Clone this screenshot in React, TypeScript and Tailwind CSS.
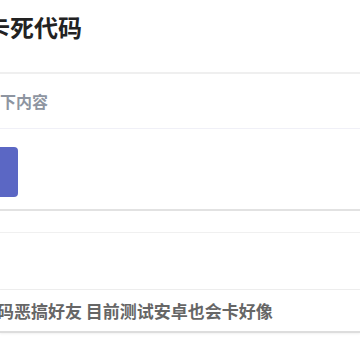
export default function App() {
  return (
    <div
      className="w-[360px] h-[360px] overflow-hidden bg-white"
      style={{ fontFamily: '"Noto Sans CJK SC", "Noto Sans", sans-serif' }}
    >
      {/* title */}
      <div className="h-[74px] border-b-2 border-[#efefef] pt-[11px]">
        <h1 className="-ml-[14px] text-[24px] leading-[32px] font-bold text-[#222222] whitespace-nowrap">
          卡死代码
        </h1>
      </div>

      {/* subtitle */}
      <div className="h-[55px] border-b border-[#f0f0f7] flex items-center">
        <p className="text-[16px] leading-[22px] font-bold text-[#8e95a1] whitespace-nowrap">
          下内容
        </p>
      </div>

      {/* action row */}
      <div className="h-[82px] border-b-2 border-[#e2e2e2] pt-[18px]">
        <button className="-ml-[42px] w-[60px] h-[50px] rounded-[4px] bg-[#5b67c4]" />
      </div>

      <div className="h-[22px] border-b border-[#f0f0f0]" />
      <div className="h-[57px] border-b border-[#eeeeee]" />

      {/* comment */}
      <div className="h-[43px] border-b-2 border-[#dddddd] shadow-[0_1px_2px_rgba(0,0,0,0.06)] flex items-center">
        <p className="-ml-[3px] text-[17px] leading-[22px] font-bold text-[#666666] whitespace-nowrap">
          码恶搞好友 目前测试安卓也会卡好像
        </p>
      </div>
    </div>
  );
}
